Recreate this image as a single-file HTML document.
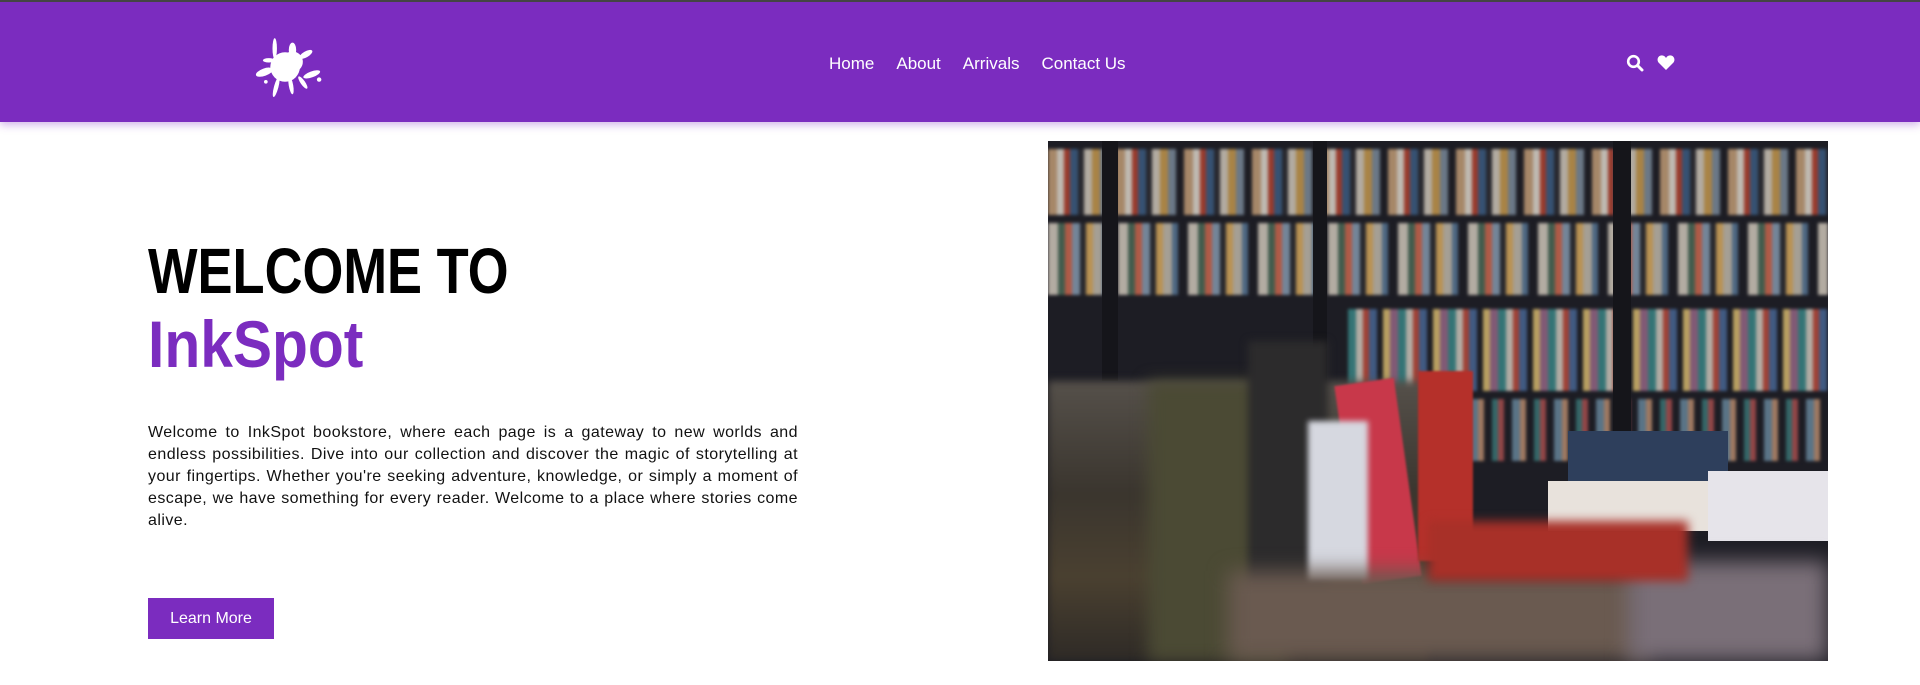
<!DOCTYPE html>
<html><head><meta charset="utf-8"><style>
*{margin:0;padding:0;box-sizing:border-box}
body{width:1920px;height:685px;overflow:hidden;background:#fff;font-family:"Liberation Sans",sans-serif;position:relative}
.nav{position:absolute;left:0;top:0;width:1920px;height:122px;background:#7b2cbf;border-top:2px solid #444;box-shadow:0 3px 8px rgba(123,44,191,.35)}
.links{position:absolute;top:52px;left:829px;color:#fff;font-size:17px;white-space:nowrap}
.links span{margin-right:22px}
h1{position:absolute;left:148px;top:234px;font-size:64px;font-weight:bold;color:#000;white-space:nowrap;transform:scaleX(.82);transform-origin:left}
h2{position:absolute;left:148px;top:306px;font-size:66px;font-weight:bold;color:#7b2cbf;white-space:nowrap;transform:scaleX(.89);transform-origin:left}
p{position:absolute;left:148px;top:422px;width:650px;font-size:16px;letter-spacing:.45px;line-height:22px;text-align:justify;color:#111}
.btn{position:absolute;left:148px;top:598px;width:126px;height:41px;background:#7b2cbf;color:#fff;font-size:16px;line-height:41px;text-align:center}
.img{position:absolute;left:1048px;top:141px;width:780px;height:520px;overflow:hidden;background:#1d1d24}
.img div{position:absolute}
.sh{filter:blur(1.5px);opacity:.8}
</style></head><body>
<div class="nav">
<svg style="position:absolute;left:254px;top:30px" width="74" height="70" viewBox="0 0 100 90" fill="#fff">
<circle cx="42" cy="45" r="20"/><circle cx="52" cy="38" r="14"/><ellipse cx="28" cy="20" rx="3" ry="14"/><ellipse cx="52" cy="22" rx="5" ry="10"/><ellipse cx="70" cy="28" rx="10" ry="4" transform="rotate(-30 70 28)"/><ellipse cx="78" cy="55" rx="12" ry="4" transform="rotate(-20 78 55)"/><ellipse cx="14" cy="52" rx="12" ry="5" transform="rotate(-20 14 52)"/><ellipse cx="20" cy="36" rx="8" ry="3"/><ellipse cx="30" cy="72" rx="3" ry="14" transform="rotate(15 30 72)"/><ellipse cx="50" cy="70" rx="3" ry="12" transform="rotate(-10 50 70)"/><ellipse cx="66" cy="66" rx="3" ry="10" transform="rotate(-35 66 66)"/><circle cx="88" cy="62" r="3"/><circle cx="16" cy="65" r="2.5"/>
</svg>
<div class="links"><span>Home</span><span>About</span><span>Arrivals</span><span>Contact Us</span></div>
<svg style="position:absolute;left:1626px;top:52px" width="18" height="18" viewBox="0 0 18 18"><circle cx="7.5" cy="7.5" r="5.3" fill="none" stroke="#fff" stroke-width="2.6"/><path d="M11.5 11.5 L16 16" stroke="#fff" stroke-width="3" stroke-linecap="round"/></svg>
<svg style="position:absolute;left:1657px;top:52px" width="18" height="17" viewBox="0 0 24 22"><path d="M12 21 L2.5 11.5 C-1 8 1 1.5 6.5 1.5 C9 1.5 11 3 12 5 C13 3 15 1.5 17.5 1.5 C23 1.5 25 8 21.5 11.5 Z" fill="#fff"/></svg>
</div>
<h1>WELCOME TO</h1>
<h2>InkSpot</h2>
<p>Welcome to InkSpot bookstore, where each page is a gateway to new worlds and endless possibilities. Dive into our collection and discover the magic of storytelling at your fingertips. Whether you're seeking adventure, knowledge, or simply a moment of escape, we have something for every reader. Welcome to a place where stories come alive.</p>
<div class="btn">Learn More</div>
<div class="img">
<div class="sh" style="left:0;top:8px;width:780px;height:66px;background:repeating-linear-gradient(90deg,#c9a27a 0 9px,#e8e2d6 9px 16px,#b8422e 16px 22px,#3d5f86 22px 30px,#2a2a30 30px 36px,#d8cfc0 36px 44px,#cc9d4e 44px 52px,#7f8fa0 52px 60px,#1d1d24 60px 68px)"></div>
<div class="sh" style="left:0;top:82px;width:780px;height:72px;background:repeating-linear-gradient(90deg,#d9d0c2 0 10px,#4b6c58 10px 17px,#d66a4f 17px 24px,#8aa0b7 24px 32px,#2a2a30 32px 38px,#e0b060 38px 45px,#c8c0b0 45px 54px,#5a7a9a 54px 60px,#1d1d24 60px 70px)"></div>
<div class="sh" style="left:300px;top:168px;width:480px;height:82px;background:repeating-linear-gradient(90deg,#3a8a8a 0 8px,#d8d0c4 8px 15px,#c04a3a 15px 21px,#4a6a9a 21px 29px,#1d1d24 29px 35px,#e0c070 35px 42px,#9a6a8a 42px 50px)"></div>
<div class="sh" style="left:380px;top:258px;width:400px;height:62px;background:repeating-linear-gradient(90deg,#6a8aa0 0 8px,#c09070 8px 14px,#1d1d24 14px 22px,#3a7a7a 22px 28px,#b05050 28px 34px,#1d1d24 34px 42px)"></div>
<div style="left:54px;top:0;width:16px;height:240px;background:#15151a"></div>
<div style="left:265px;top:0;width:14px;height:400px;background:#15151a"></div>
<div style="left:565px;top:0;width:18px;height:400px;background:#15151a"></div>
<div style="left:0;top:240px;width:380px;height:280px;background:linear-gradient(180deg,#55504a,#3a352e 40%,#4a4030 70%,#2e2a26);filter:blur(4px)"></div>
<div style="left:100px;top:240px;width:140px;height:280px;background:#4b4a34;filter:blur(8px)"></div>
<div style="left:200px;top:200px;width:80px;height:300px;background:#2c2b2c;filter:blur(4px)"></div>
<div style="left:300px;top:240px;width:60px;height:200px;background:#c8384a;transform:rotate(-8deg);filter:blur(1px)"></div>
<div style="left:370px;top:230px;width:55px;height:190px;background:#b5302a;filter:blur(1px)"></div>
<div style="left:260px;top:280px;width:60px;height:160px;background:#d6d8e0;filter:blur(3px)"></div>
<div style="left:520px;top:290px;width:160px;height:50px;background:#2e3f5c"></div>
<div style="left:500px;top:340px;width:180px;height:50px;background:#e8e2dc"></div>
<div style="left:660px;top:330px;width:120px;height:70px;background:#e6e4ea"></div>
<div style="left:180px;top:430px;width:420px;height:90px;background:#6a5a50;filter:blur(10px)"></div>
<div style="left:580px;top:420px;width:200px;height:100px;background:#7a6f78;filter:blur(10px)"></div>
<div style="left:380px;top:380px;width:260px;height:60px;background:#a83028;filter:blur(5px)"></div>
</div>
</body></html>
